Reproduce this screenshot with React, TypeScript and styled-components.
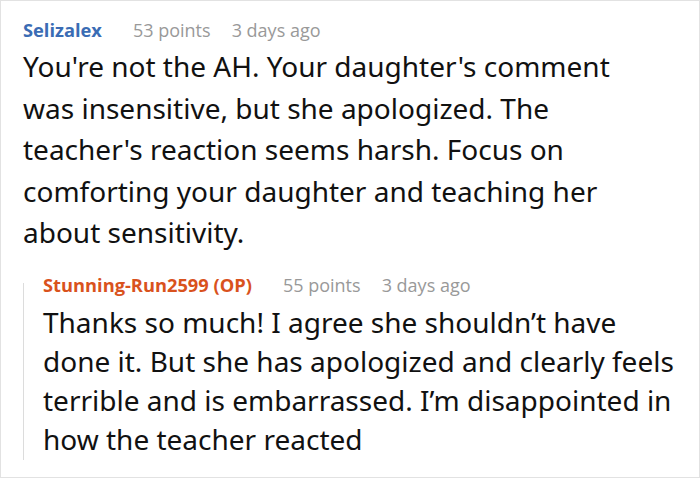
import React from 'react';
import styled, { createGlobalStyle } from 'styled-components';

const GlobalStyle = createGlobalStyle`
  html, body {
    margin: 0;
    padding: 0;
    background: #fff;
  }
`;

const App = () => {
  return (
    <>
      <GlobalStyle />
      <Frame>
        <Comment>
          <Meta>
            <Author>Selizalex</Author>
            <Info>53 points</Info>
            <Info>3 days ago</Info>
          </Meta>
          <Body>
            You're not the AH. Your daughter's comment was insensitive, but she apologized. The
            teacher's reaction seems harsh. Focus on comforting your daughter and teaching her
            about sensitivity.
          </Body>
        </Comment>
        <Reply>
          <Meta>
            <Author $op>Stunning-Run2599 (OP)</Author>
            <Info>55 points</Info>
            <Info>3 days ago</Info>
          </Meta>
          <Body $nested>
            Thanks so much! I agree she shouldn’t have done it. But she has apologized and clearly
            feels terrible and is embarrassed. I’m disappointed in how the teacher reacted
          </Body>
        </Reply>
      </Frame>
    </>
  );
};

const Frame = styled.div`
  box-sizing: border-box;
  width: 700px;
  height: 478px;
  border: 1px solid #e2e2e2;
  padding: 17px 19px 0 22px;
  overflow: hidden;
  background: #fff;
`;

const Comment = styled.div`
  display: flex;
  flex-direction: column;
  gap: 4px;
`;

const Reply = styled.div`
  position: relative;
  display: flex;
  flex-direction: column;
  gap: 6px;
  margin-top: 19px;
  padding-left: 20px;

  &::before {
    content: '';
    position: absolute;
    left: 0;
    top: 10px;
    bottom: -1px;
    width: 1px;
    background: #dcdcdc;
  }
`;

const Meta = styled.div`
  display: flex;
  align-items: baseline;
  gap: 21px;
  font-family: 'Open Sans', sans-serif;
  font-size: 18px;
  line-height: 24px;
`;

const Author = styled.span<{ $op?: boolean }>`
  margin-right: 10px;
  font-size: 18.3px;
  font-weight: 700;
  color: ${({ $op }) => ($op ? '#d9521d' : '#3a6cb4')};
`;

const Info = styled.span`
  color: #999;
`;

const Body = styled.div<{ $nested?: boolean }>`
  max-width: ${({ $nested }) => ($nested ? 'none' : '620px')};
  font-family: 'Noto Sans', sans-serif;
  font-size: 28px;
  line-height: ${({ $nested }) => ($nested ? 39 : 41.5)}px;
  color: #111;
`;

export default App;
